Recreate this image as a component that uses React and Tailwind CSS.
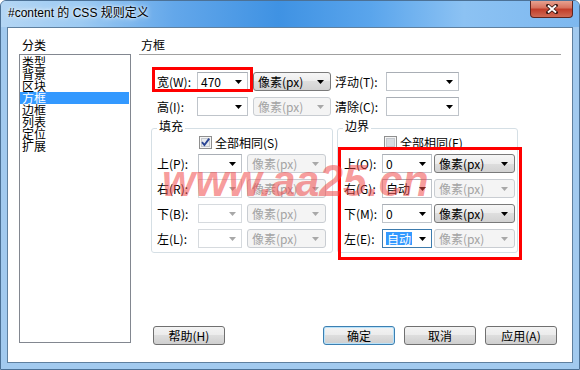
import React from 'react'

const Arrow = ({ disabled }) => (
  <svg width="7" height="4" viewBox="0 0 7 4" className="shrink-0">
    <path d="M0 0H7L3.5 4Z" fill={disabled ? '#a8a8a8' : '#000'} />
  </svg>
)

const Combo = ({ className = '', value = '', disabled = false, selected = false }) => (
  <div
    className={`flex h-[19px] items-center justify-between border bg-white pl-[3px] pr-[5px] ${
      selected
        ? 'border-[#3d7bad]'
        : disabled
        ? 'border-[#d6dade]'
        : 'border-[#bfc4ca] border-t-[#a9aeb5]'
    } ${className}`}
  >
    <span className={`leading-[13px] ${selected ? 'bg-[#3399ff] px-[1px] text-white' : 'text-black'}`}>{value}</span>
    <Arrow disabled={disabled} />
  </div>
)

const Unit = ({ className = '', disabled = false }) => (
  <div
    className={`flex h-[19px] items-center justify-between rounded-[3px] border pl-[4px] pr-[6px] ${
      disabled
        ? 'border-[#c9cdd2] bg-[#f4f4f4] text-[#a3a3a3]'
        : 'border-[#7a7a7a] bg-[linear-gradient(#f6f6f6_0%,#ececec_50%,#dedede_50%,#d2d2d2_100%)] text-black'
    } ${className}`}
  >
    <span>像素(px)</span>
    <Arrow disabled={disabled} />
  </div>
)

const Check = ({ checked }) => (
  <svg width="13" height="13" viewBox="0 0 13 13" className="shrink-0">
    <rect x="0.5" y="0.5" width="12" height="12" fill="#f5f5f5" stroke="#8f8f8f" />
    <rect x="2.5" y="2.5" width="8" height="8" fill={checked ? '#e6e9ee' : '#d7dbe0'} stroke="#c4c8ce" />
    {checked && <path d="M3 6.2L5.4 9L10.2 2.6" fill="none" stroke="#2a4594" strokeWidth="1.9" />}
  </svg>
)

const Button = ({ children, focused }) => (
  <div
    className={`flex h-[19px] w-[72px] items-center justify-center rounded-[3px] border bg-[linear-gradient(#f3f3f3_0%,#ebebeb_50%,#dddddd_50%,#cfcfcf_100%)] ${
      focused ? 'border-[#3c7fb1] shadow-[inset_0_0_0_1px_#b8e2fa]' : 'border-[#707070]'
    }`}
  >
    {children}
  </div>
)

const Group = ({ title, className = '', children }) => (
  <div className={`relative h-[125px] rounded-[3px] border border-[#d5dfe5] ${className}`}>
    <span className="absolute left-[5px] top-[-9px] bg-white px-[2px] leading-[12px]">{title}</span>
    {children}
  </div>
)

const padRows = [
  { label: '上(P):', enabled: true },
  { label: '右(R):' },
  { label: '下(B):' },
  { label: '左(L):' },
]

const marginRows = [
  { label: '上(O):', value: '0', unit: true },
  { label: '右(G):', value: '自动' },
  { label: '下(M):', value: '0', unit: true },
  { label: '左(E):', value: '自动', selected: true },
]

const categories = ['类型', '背景', '区块', '方框', '边框', '列表', '定位', '扩展']

export default function App() {
  return (
    <div className="relative flex h-[370px] w-[580px] flex-col overflow-hidden rounded-t-[6px] border border-[#4c7196] bg-[#a2caef] font-['Noto_Sans_CJK_SC',sans-serif] text-[12px] leading-[12px] text-black">
      {/* title bar */}
      <div className="-mx-px -mt-px flex h-[27px] items-start justify-between bg-[linear-gradient(to_right,#b4d6f4_0%,#9ccaf2_14%,#63a7ea_30%,#3f92e3_48%,#5aa5ec_64%,#8cc2f3_80%,#7db8ef_100%)] pl-[8px] pr-[7px]">
        <span className="mt-[5px] font-['Liberation_Sans','Noto_Sans_CJK_SC',sans-serif] text-[12px] leading-[16px] [text-shadow:0_0_6px_#fff,0_0_3px_#fff]">
          #content 的 CSS 规则定义
        </span>
        <div className="flex h-[18px] w-[43px] items-center justify-center rounded-b-[4px] border border-t-0 border-[#5e2520] bg-[linear-gradient(#e9a897_0%,#d8735f_45%,#c23e2a_55%,#cf6a55_100%)]">
          <svg width="12" height="10" viewBox="0 0 12 10">
            <path d="M2 1.5L10 8.5M10 1.5L2 8.5" stroke="#3c1a16" strokeWidth="3.6" strokeLinecap="square" />
            <path d="M2 1.5L10 8.5M10 1.5L2 8.5" stroke="#fff" strokeWidth="1.9" />
          </svg>
        </div>
      </div>

      {/* client */}
      <div className="flex flex-1 px-[6px] pb-[6px]">
        <div className="flex flex-1 border border-[#5f809f] bg-white pl-[11px] pt-[11px]">
          {/* categories */}
          <div className="flex w-[112px] flex-col">
            <span className="pl-[3px]">分类</span>
            <div className="mt-[3px] h-[289px] border border-[#828790] pt-px">
              {categories.map((c) => (
                <div
                  key={c}
                  className={`mr-px h-[12px] pl-[2px] leading-[12px] ${c === '方框' ? 'bg-[#3399ff] text-white' : ''}`}
                >
                  {c}
                </div>
              ))}
            </div>
          </div>

          {/* panel */}
          <div className="ml-[8px] flex w-[422px] flex-col">
            <span className="pl-[2px]">方框</span>
            <div className="mt-[3px] h-px bg-[#a0a0a0]" />

            <div className="relative mt-[17px] flex h-[19px] items-center">
              <span className="ml-[18px] w-[40px]">宽(W):</span>
              <Combo className="w-[51px]" value="470" />
              <Unit className="ml-[5px] w-[78px]" />
              <span className="ml-[4px] w-[51px]">浮动(T):</span>
              <Combo className="w-[73px]" />
              <div className="pointer-events-none absolute left-[13px] top-[-5px] h-[25px] w-[101px] border-[3px] border-[#ff0000]" />
            </div>
            <div className="mt-[6px] flex h-[19px] items-center">
              <span className="ml-[18px] w-[40px]">高(I):</span>
              <Combo className="w-[51px]" />
              <Unit className="ml-[5px] w-[78px]" disabled />
              <span className="ml-[4px] w-[51px]">清除(C):</span>
              <Combo className="w-[73px]" />
            </div>

            <div className="mt-[12px] flex">
              <Group title="填充" className="ml-[12px] w-[182px]">
                <div className="mt-[7px] flex items-center gap-[3px] pl-[47px]">
                  <Check checked />
                  <span>全部相同(S)</span>
                </div>
                <div className="mt-[5px] flex flex-col gap-[6px]">
                  {padRows.map((r) => (
                    <div key={r.label} className="flex h-[19px] items-center pl-[5px]">
                      <span className="w-[41px]">{r.label}</span>
                      <Combo className="w-[44px]" disabled={!r.enabled} />
                      <Unit className="ml-[5px] w-[79px]" disabled />
                    </div>
                  ))}
                </div>
              </Group>

              <Group title="边界" className="ml-[4px] w-[181px]">
                <div className="mt-[7px] flex items-center gap-[3px] pl-[46px]">
                  <Check />
                  <span>全部相同(F)</span>
                </div>
                <div className="mt-[5px] flex flex-col gap-[6px]">
                  {marginRows.map((r) => (
                    <div key={r.label} className="flex h-[19px] items-center pl-[6px]">
                      <span className="w-[38px]">{r.label}</span>
                      <Combo className="w-[50px]" value={r.value} selected={r.selected} />
                      <Unit className="ml-[2px] w-[81px]" disabled={!r.unit} />
                    </div>
                  ))}
                </div>
                <div className="pointer-events-none absolute left-0 top-[18px] h-[113px] w-[184px] border-[3px] border-[#ff0000]" />
              </Group>
            </div>

            <div className="mt-[73px] flex justify-between pl-[14px] pr-[4px]">
              <Button>帮助(H)</Button>
              <div className="flex gap-[9px]">
                <Button focused>确定</Button>
                <Button>取消</Button>
                <Button>应用(A)</Button>
              </div>
            </div>
          </div>
        </div>
      </div>

      {/* watermark */}
      <span className="pointer-events-none absolute left-[161px] top-[158px] origin-left scale-x-[0.97] font-['Liberation_Sans',sans-serif] text-[44px] font-bold italic leading-none text-[#f04848]/55">
        www.aa25.cn
      </span>
    </div>
  )
}
